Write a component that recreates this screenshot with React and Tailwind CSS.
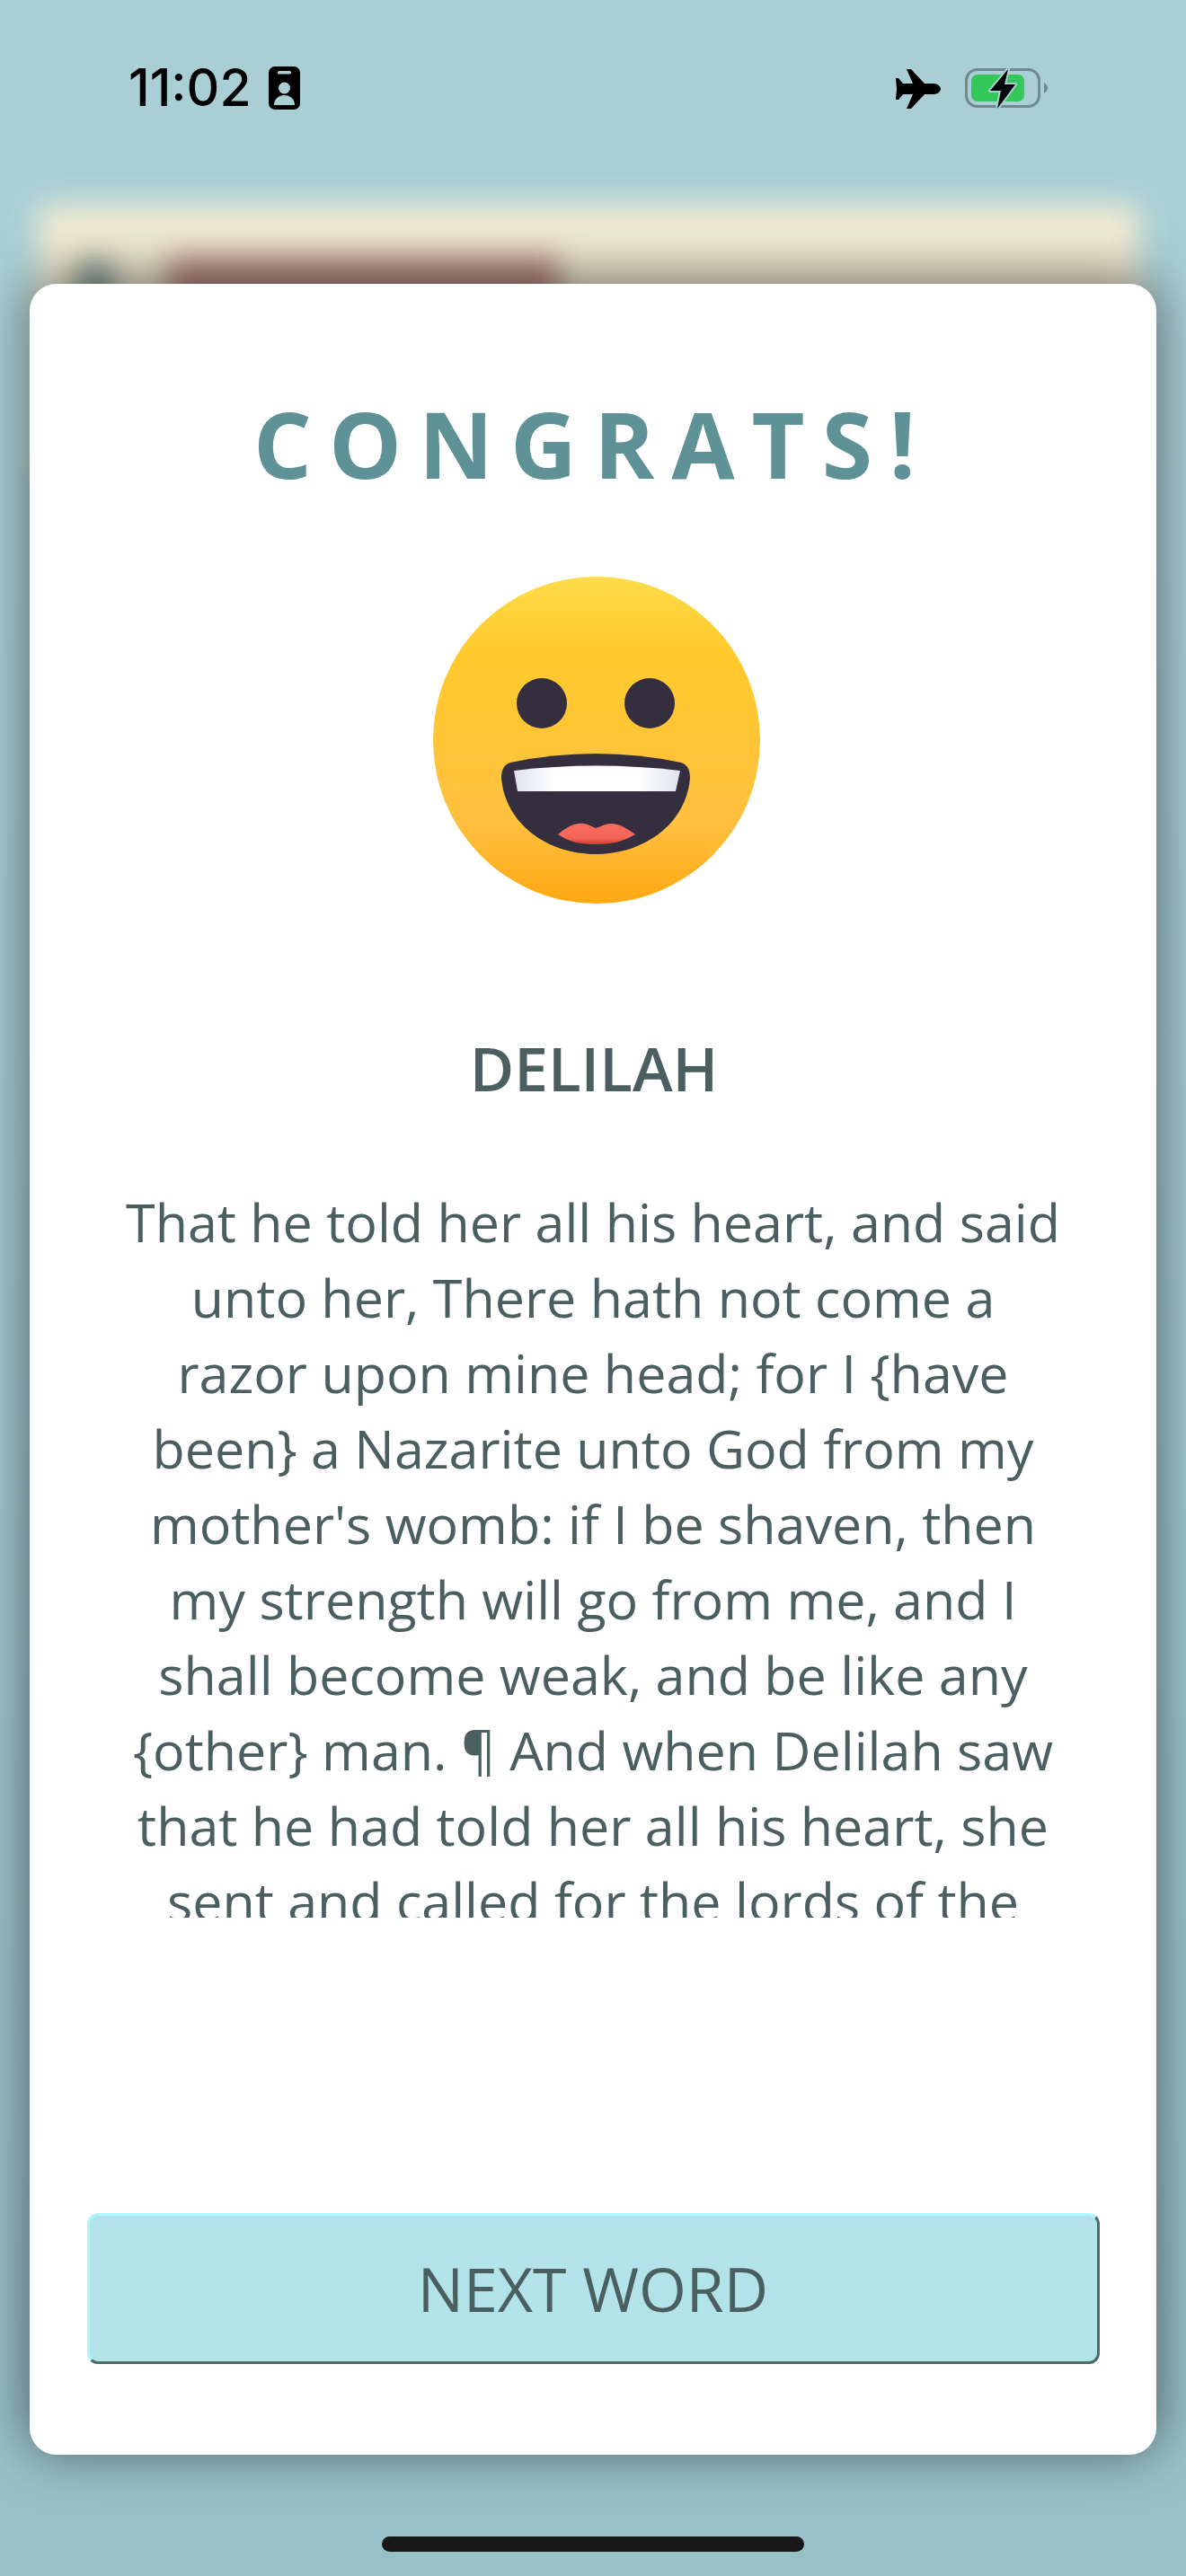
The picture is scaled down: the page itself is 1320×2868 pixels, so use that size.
import React from 'react';

const bodyText = "That he told her all his heart, and said unto her, There hath not come a razor upon mine head; for I {have been} a Nazarite unto God from my mother's womb: if I be shaven, then my strength will go from me, and I shall become weak, and be like any {other} man. ¶ And when Delilah saw that he had told her all his heart, she sent and called for the lords of the Philistines, saying, Come up this once, for he hath shewed me all his heart.";

const IdBadge = () => (
    <svg width="35" height="48" viewBox="0 0 35 48">
        <rect width="35" height="48" rx="7" fill="#000" />
        <rect x="10" y="5" width="15" height="3.5" rx="1.5" fill="#a9cfd5" />
        <circle cx="17.5" cy="24" r="6.5" fill="#a9cfd5" />
        <path d="M6 43 C6 36 11 32 17.5 32 C24 32 29 36 29 43 Z" fill="#a9cfd5" />
    </svg>
);

const Airplane = () => (
    <svg width="50" height="46" viewBox="0 0 50 46">
        <path d="M50 23 C50 20 46 17 42 17 L32 17 L17 1 L12 1 L19 17 L8 17 L3 11 L0 11 L1 23 L0 35 L3 35 L8 29 L19 29 L12 45 L17 45 L32 29 L42 29 C46 29 50 26 50 23 Z" fill="#000" />
    </svg>
);

const Battery = () => (
    <svg width="92" height="46" viewBox="0 0 92 46">
        <rect x="1.5" y="1.5" width="81" height="41" rx="12" fill="none" stroke="#6f8a8f" strokeWidth="3" />
        <rect x="7" y="7" width="59" height="30" rx="7" fill="#34c759" />
        <path d="M88 16 C91 18 92 20 92 22 C92 24 91 26 88 28 Z" fill="#6f8a8f" />
        <path d="M48 1 L28 25 L40 25 L36 45 L56 18 L44 18 Z" fill="#000" stroke="#a9cfd5" strokeWidth="4" strokeLinejoin="round" paintOrder="stroke" />
    </svg>
);

const GrinFace = () => (
    <svg width="364" height="364" viewBox="0 0 364 364">
        <defs>
            <linearGradient id="face" x1="0" y1="0" x2="0" y2="1">
                <stop offset="0" stopColor="#ffdc4a" />
                <stop offset="0.22" stopColor="#ffca2c" />
                <stop offset="0.75" stopColor="#ffc040" />
                <stop offset="1" stopColor="#ffa812" />
            </linearGradient>
            <linearGradient id="teeth" x1="0" y1="0" x2="1" y2="0">
                <stop offset="0" stopColor="#dfe2ee" />
                <stop offset="0.25" stopColor="#ffffff" />
                <stop offset="0.75" stopColor="#ffffff" />
                <stop offset="1" stopColor="#dfe2ee" />
            </linearGradient>
            <linearGradient id="lip" x1="0" y1="0" x2="0" y2="1">
                <stop offset="0" stopColor="#f76c5e" />
                <stop offset="0.7" stopColor="#f4655a" />
                <stop offset="1" stopColor="#d63a2c" />
            </linearGradient>
        </defs>
        <circle cx="182" cy="182" r="182" fill="url(#face)" />
        <circle cx="121" cy="141" r="28" fill="#342e3e" />
        <circle cx="241" cy="141" r="28" fill="#342e3e" />
        <path d="M86 207 Q181 187 276 207 Q286 210 286 224 C282 275 235 309 181 309 C127 309 80 275 76 224 Q76 210 86 207 Z" fill="#342e3e" />
        <path d="M90 216 Q181 205 275 216 L270 239 L94 239 Z" fill="url(#teeth)" />
        <path d="M139 287 C150 278 158 274 168 275 C174 276 178 279 181 280 C185 279 190 276 196 275 C206 274 216 280 225 287 C210 296 196 298 181 298 C166 298 152 296 139 287 Z" fill="url(#lip)" />
    </svg>
);

const App = () => {
    return (
        <div className="relative flex h-[2868px] w-[1320px] flex-col overflow-hidden bg-gradient-to-b from-[#a9cfd5] from-20% to-[#98c0c7] to-90% font-['Open_Sans',sans-serif]">
            {/* blurred screen behind the modal */}
            <div className="absolute left-[42px] top-[228px] h-[300px] w-[1226px] bg-[#f1ebd2] blur-[16px]">
                <div className="absolute left-[46px] top-[62px] h-[100px] w-[36px] bg-[#7a9490]" />
                <div className="absolute left-[145px] top-[58px] h-[100px] w-[435px] bg-[#b58781]" />
            </div>

            <div className="relative flex h-[316px] shrink-0 items-start justify-between pl-[143px] pr-[154px] pt-[74px]">
                <div className="flex items-center gap-[19px]">
                    <span className="font-['Inter',sans-serif] text-[57px] font-medium leading-[48px] text-black">11:02</span>
                    <IdBadge />
                </div>
                <div className="flex items-start gap-[27px] pt-[2px]">
                    <Airplane />
                    <Battery />
                </div>
            </div>

            <div className="relative ml-[33px] flex h-[2417px] w-[1254px] flex-col items-center rounded-[30px] bg-white shadow-[0_-6px_60px_rgba(0,0,0,0.55)]">
                <h1 className="mt-[118px] text-[102px] font-bold leading-[120px] tracking-[19px] text-[#5f9297]">CONGRATS!</h1>
                <div className="ml-[7px] mt-[88px]">
                    <GrinFace />
                </div>
                <h2 className="ml-[2px] mt-[138px] text-[67.5px] font-semibold leading-[90px] text-[#4b5f60]">DELILAH</h2>
                <div className="mt-[84px] h-[817px] w-[1044px] overflow-hidden text-center text-[59.2px] leading-[84px] text-[#4b5f60]">
                    {bodyText}
                </div>
                <button className="mt-auto mb-[101px] h-[168px] w-[1127px] rounded-[12px] border-[3px] border-t-[#aef6ff] border-l-[#aef6ff] border-r-[#4e6a6c] border-b-[#4e6a6c] bg-[#b1e3e8] text-[68px] leading-[90px] text-[#4b5f60]">
                    NEXT WORD
                </button>
            </div>

            <div className="relative mx-auto mt-[91px] h-[17px] w-[470px] rounded-full bg-[#181818]" />
        </div>
    );
};

export default App;
